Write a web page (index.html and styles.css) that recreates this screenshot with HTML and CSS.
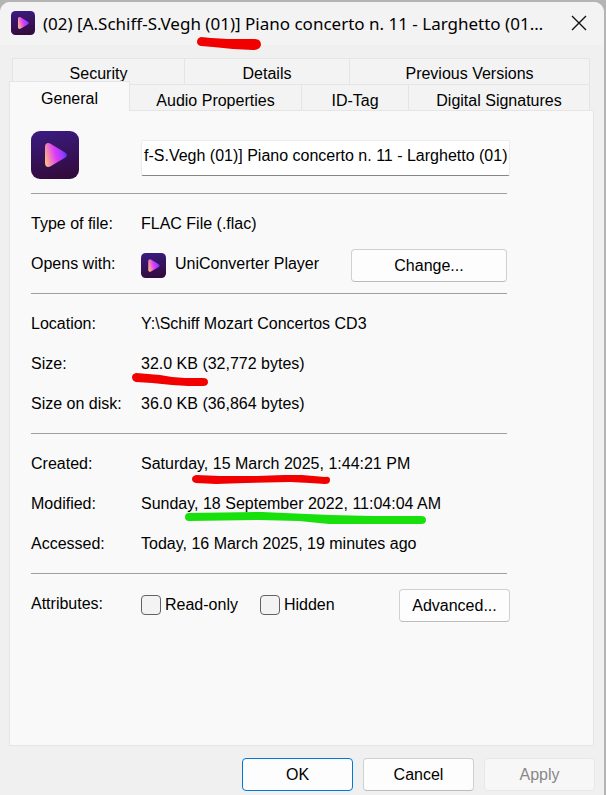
FILE: index.html
```
<!DOCTYPE html>
<html lang="en">

<head>
  <meta charset="utf-8">
  <meta name="viewport" content="width=device-width, initial-scale=1">
  <title>File Properties</title>
  <link rel="stylesheet" href="styles.css">
</head>

<body>
  <!-- Shared app icon -->
  <svg class="defs" aria-hidden="true">
    <defs>
      <linearGradient id="tile" x1="0" y1="0" x2="0.2" y2="1">
        <stop offset="0" stop-color="#3b1c83" />
        <stop offset="1" stop-color="#330c3f" />
      </linearGradient>
      <linearGradient id="play" x1="0" y1="0.7" x2="1" y2="0.4">
        <stop offset="0" stop-color="#ffb982" />
        <stop offset="0.5" stop-color="#dc3cf8" />
        <stop offset="0.75" stop-color="#a83cff" />
        <stop offset="1" stop-color="#4a38ff" />
      </linearGradient>
      <symbol id="player" viewBox="0 0 48 48">
        <rect width="48" height="48" rx="9" fill="url(#tile)" />
        <path d="M14 16c0-4 3-5 6-3l14 8.500c2.600 1.600 2.600 3.600 0 5.200L20 35c-3 2-6 1-6-3z" fill="url(#play)" />
      </symbol>
    </defs>
  </svg>

  <div class="dialog">
    <header class="titlebar">
      <svg class="app-icon" aria-hidden="true"><use href="#player" /></svg>
      <h1>(02) [A.Schiff-S.Vegh <span class="marked">(01)]<svg class="mark mark-title" viewBox="0 0 64 13" aria-hidden="true"><path d="M4 0Q0 1 0 5q0 3 4 4l12 1 20 2 20 1q7 0 8-5 0-6-6-6l-27 0-17-1z" /></svg></span> Piano concerto n. 11 - Larghetto (01) Properties</h1>
      <button class="close" aria-label="Close">
        <svg viewBox="0 0 16 16" aria-hidden="true"><path d="M1 1l14 14M15 1L1 15" /></svg>
      </button>
    </header>

    <div class="tabs" role="tablist">
      <div class="tab-row back">
        <button class="tab" role="tab"><span>Security</span></button>
        <button class="tab" role="tab"><span>Details</span></button>
        <button class="tab" role="tab"><span>Previous Versions</span></button>
      </div>
      <div class="tab-row front">
        <button class="tab active" role="tab" aria-selected="true"><span>General</span></button>
        <button class="tab" role="tab"><span>Audio Properties</span></button>
        <button class="tab" role="tab"><span>ID-Tag</span></button>
        <button class="tab" role="tab"><span>Digital Signatures</span></button>
      </div>
    </div>

    <main class="panel" role="tabpanel">
      <div class="name-row">
        <svg class="file-icon" aria-hidden="true"><use href="#player" /></svg>
        <input class="file-name" type="text" aria-label="File name" value="f-S.Vegh (01)] Piano concerto n. 11 - Larghetto (01)">
      </div>

      <dl class="group">
        <dt>Type of file:</dt>
        <dd>FLAC File (.flac)</dd>
        <dt>Opens with:</dt>
        <dd class="opens-with">
          <svg class="small-icon" aria-hidden="true"><use href="#player" /></svg>
          <span>UniConverter Player</span>
          <button class="button change">Change...</button>
        </dd>
      </dl>

      <dl class="group">
        <dt>Location:</dt>
        <dd>Y:\Schiff Mozart Concertos CD3</dd>
        <dt>Size:</dt>
        <dd><span class="marked">32.0 KB<svg class="mark mark-size" viewBox="0 0 76 13" aria-hidden="true"><path d="M4 0Q0 1 0 4q0 4 4 5l16 1 20 2 16 1h15q5 0 5-4 0-4-5-4H53L40 4 28 2z" /></svg></span> (32,772 bytes)</dd>
        <dt>Size on disk:</dt>
        <dd>36.0 KB (36,864 bytes)</dd>
      </dl>

      <dl class="group">
        <dt>Created:</dt>
        <dd>Saturday<span class="marked">, 15 March 2025,<svg class="mark mark-created" viewBox="0 0 138 10" aria-hidden="true"><path d="M4 0Q0 1 0 4t4 4l20 1 30-1 44-1 20 1 15 1q5 0 5-4t-5-3l-23-2H92L65 1H28z" /></svg></span> 1:44:21 PM</dd>
        <dt>Modified:</dt>
        <dd>Sunday<span class="marked">, 18 September 2022, 11:04:04<svg class="mark mark-modified" viewBox="0 0 242 12" aria-hidden="true"><path class="green" d="M4 1Q0 1 0 5t4 4l70-1 40 1 30 3h48l44 0q5 0 5-4t-5-4h-48l-43-1-46-2-22-1z" /></svg></span> AM</dd>
        <dt>Accessed:</dt>
        <dd>Today, 16 March 2025, 19 minutes ago</dd>
      </dl>

      <dl class="group">
        <dt>Attributes:</dt>
        <dd class="attributes">
          <label class="check"><input type="checkbox">Read-only</label>
          <label class="check"><input type="checkbox">Hidden</label>
          <button class="button advanced">Advanced...</button>
        </dd>
      </dl>
    </main>

    <footer class="actions">
      <button class="button primary">OK</button>
      <button class="button">Cancel</button>
      <button class="button" disabled>Apply</button>
    </footer>
  </div>
</body>

</html>
```
FILE: styles.css
```
:root {
  --window-bg: #f0f0f0;
  --title-bg: #f3f3f3;
  --panel-bg: #f9f9f9;
  --line: #e5e5e5;
  --rule: #a0a0a0;
  --button-border: #d0d0d0;
  --accent: #0078d4;
  --red: #f20000;
  --green: #18e00c;
}

* {
  box-sizing: border-box;
}

body {
  margin: 0;
  padding: 2px 2px 0 0;
  background: #b4b4b4;
  color: #000;
  font: 16px/20px "Liberation Sans", Arial, sans-serif;
}

button,
input {
  font: inherit;
  color: inherit;
}

.defs {
  position: absolute;
  width: 0;
  height: 0;
}

.dialog {
  display: flex;
  flex-direction: column;
  min-height: calc(100vh - 2px);
  background: var(--window-bg);
  border-radius: 10px 10px 0 0;
}

/* Title bar */
.titlebar {
  display: flex;
  align-items: center;
  height: 43px;
  padding: 0 8px 0 11px;
  background: var(--title-bg);
  border-radius: 10px 10px 0 0;
}

.app-icon {
  flex: none;
  width: 24px;
  height: 24px;
  margin: 0 8px 2px 0;
}

h1 {
  flex: 1;
  min-width: 0;
  margin: 0 0 -6px;
  padding-bottom: 6px;
  overflow: hidden;
  text-overflow: ellipsis;
  white-space: nowrap;
  font: 17px/41px "Noto Sans", "Segoe UI", sans-serif;
}

.close {
  flex: none;
  width: 34px;
  height: 34px;
  margin: 0 0 2px 16px;
  padding: 9px;
  border: none;
  background: none;
}

.close svg {
  display: block;
  width: 16px;
  height: 16px;
  fill: none;
  stroke: #111;
  stroke-width: 1.4;
}

/* Tabs */
.tabs {
  padding: 13px 14px 0 9px;
}

.tab-row {
  display: grid;
  height: 26px;
}

.back {
  grid-template-columns: 172fr 165fr 241fr;
  margin-left: 3px;
}

.front {
  grid-template-columns: 121fr 171fr 107fr 182fr;
}

.tab {
  display: block;
  padding: 3px 0 0;
  border: 1px solid var(--line);
  border-width: 1px 0 0 1px;
  background: #f3f3f3;
  text-align: center;
}

.tab:last-child {
  border-right-width: 1px;
}

/* Inactive labels lose the tips of their descenders */
.tab span {
  display: block;
  height: 18px;
  overflow: hidden;
}

.active {
  position: relative;
  height: 30px;
  margin-top: -3px;
  border-right-width: 1px;
  background: var(--panel-bg);
}

.active + .tab {
  border-left: none;
}

/* Panel */
.panel {
  flex: 1;
  margin: 0 10px 0 9px;
  padding: 0 86px 0 21px;
  border: 1px solid var(--line);
  background: var(--panel-bg);
}

.name-row {
  display: flex;
  align-items: center;
  height: 82px;
  padding: 6px 0 0;
}

.file-icon {
  flex: none;
  width: 48px;
  height: 48px;
  margin-right: 62px;
}

.file-name {
  flex: 1;
  min-width: 0;
  height: 36px;
  margin: 6px -3px 0 0;
  padding: 0 0 4px 2px;
  border: 1px solid #ececec;
  border-bottom-color: #868686;
  border-radius: 2px;
  background: #fff;
}

.group {
  display: grid;
  grid-template-columns: 110px 1fr;
  grid-auto-rows: 40px;
  align-items: center;
  margin: 0;
  padding: 10px 0 9px;
  border-top: 1px solid var(--rule);
}

dd {
  margin: 0;
  white-space: nowrap;
}

.opens-with,
.attributes {
  display: flex;
  align-items: center;
}

.small-icon {
  width: 25px;
  height: 25px;
  margin: 2px 9px 0 0;
}

.button {
  width: 111px;
  height: 33px;
  padding: 1px 0 0;
  border: 1px solid var(--button-border);
  border-bottom-color: #bcbcbc;
  border-radius: 4px;
  background: #fdfdfd;
}

.change {
  width: 156px;
  margin: 2px 0 0 auto;
}

.advanced {
  margin: 2px -3px 0 auto;
}

.check {
  display: flex;
  align-items: center;
  gap: 4px;
  margin: 2px 22px 0 0;
}

.check input {
  appearance: none;
  width: 20px;
  height: 20px;
  margin: 0;
  border: 1px solid #626262;
  border-radius: 4px;
  background: #f3f3f3;
}

/* Footer */
.actions {
  display: flex;
  justify-content: flex-end;
  gap: 10px;
  padding: 12px 9px 4px;
}

.button.primary {
  border-color: var(--accent);
}

.button:disabled {
  border-color: #e8e8e8;
  background: #f7f7f7;
  color: #888;
}

/* Marker strokes */
.marked {
  position: relative;
}

.mark {
  position: absolute;
  fill: var(--red);
}

.mark .green {
  fill: var(--green);
}

.mark-title {
  left: -8px;
  top: 25px;
  width: 64px;
  height: 13px;
}

.mark-size {
  left: -9px;
  top: 18px;
  width: 76px;
  height: 13px;
}

.mark-created {
  left: -12px;
  top: 20px;
  width: 138px;
  height: 10px;
}

.mark-modified {
  left: -9px;
  top: 17px;
  width: 242px;
  height: 12px;
}
```
